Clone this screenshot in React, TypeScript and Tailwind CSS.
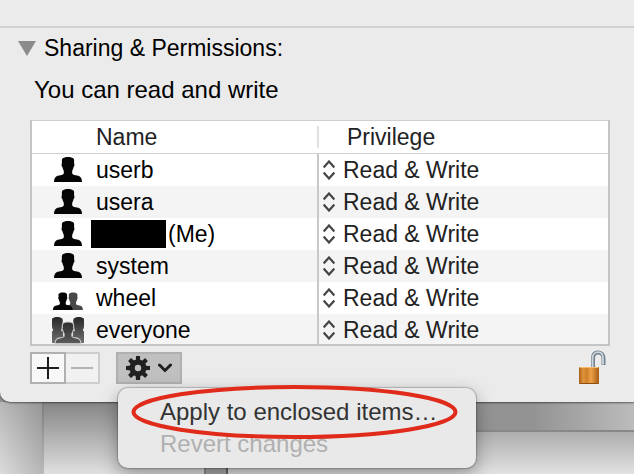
import React from "react"

type IconKind = "user" | "group" | "everyone"

interface Entry {
  id: string
  name: string
  icon: IconKind
  redacted?: boolean
}

const entries: Entry[] = [
  { id: "userb", name: "userb", icon: "user" },
  { id: "usera", name: "usera", icon: "user" },
  { id: "me", name: "(Me)", icon: "user", redacted: true },
  { id: "system", name: "system", icon: "user" },
  { id: "wheel", name: "wheel", icon: "group" },
  { id: "everyone", name: "everyone", icon: "everyone" },
]

// head and shoulders on a 28x25 grid
const BUST =
  "M8.300 1.800C9.500.500 11.500 0 14 0s4.500.500 5.700 1.800c.6 1 .5 2.600.3 4.400.8.200.5 3.300-.5 4-.3 1.500-.7 2.600-1.300 3.500v2.900c.2.8 1.500 1.300 3.300 1.700 2 .4 3.700.6 4.800 1.600C27.600 21 28 22.800 28 25H0c0-2.200.4-4 1.700-5.100 1.100-1 2.800-1.200 4.800-1.600 1.800-.4 3.100-.9 3.300-1.700v-2.900c-.6-.9-1-2-1.300-3.500-1-.7-1.300-3.800-.5-4-.2-1.800-.3-3.400.3-4.400z"

const EntryIcon = ({ kind }: { kind: IconKind }) => {
  if (kind === "group") {
    return (
      <svg className="shrink-0" width="32" height="28" viewBox="0 0 32 28" aria-hidden="true">
        <path d={BUST} fill="#484848" transform="translate(11.300 8.500) scale(.7 .7)" />
        <path d={BUST} fill="#050505" transform="translate(1 8.500) scale(.7 .7)" />
      </svg>
    )
  }
  if (kind === "everyone") {
    return (
      <svg className="shrink-0" width="32" height="28" viewBox="0 0 32 28" aria-hidden="true">
        <defs>
          <linearGradient id="bustFade" x1="0" y1="0" x2="0" y2="1">
            <stop offset="0" stopColor="#262626" />
            <stop offset="1" stopColor="#707070" />
          </linearGradient>
          <linearGradient id="bustFront" x1="0" y1="0" x2="0" y2="1">
            <stop offset="0" stopColor="#2c2c2c" />
            <stop offset="1" stopColor="#5c5c5c" />
          </linearGradient>
        </defs>
        <path d="M0 15H11V27H0zM21 15H32V27H21z" fill="#5c5c5c" />
        <path d={BUST} fill="url(#bustFade)" transform="translate(-7.400 1) scale(.9 1.040)" />
        <path d={BUST} fill="url(#bustFade)" transform="translate(14.200 1) scale(.9 1.040)" />
        <path
          d={BUST}
          fill="url(#bustFront)"
          stroke="#c8c8c8"
          strokeWidth="1.200"
          transform="translate(3.100 6) scale(.92 .86)"
        />
      </svg>
    )
  }
  return (
    <svg className="shrink-0" width="32" height="28" viewBox="0 0 32 28" aria-hidden="true">
      <path d={BUST} fill="#050505" transform="translate(2 1)" />
    </svg>
  )
}

const Stepper = () => (
  <svg
    className="shrink-0"
    width="12"
    height="20"
    viewBox="0 0 12 20"
    fill="none"
    stroke="#444"
    strokeWidth="2.200"
    aria-hidden="true"
  >
    <path d="M.600 7.400 6 1.500 11.400 7.400M.600 12.600 6 18.500 11.400 12.600" />
  </svg>
)

const Gear = () => (
  <svg width="24" height="24" viewBox="-12 -12 24 24" aria-hidden="true">
    <g fill="#202020">
      {[0, 45, 90, 135].map((angle) => (
        <path key={angle} d="M-2-12H2L2.500 7 2 12H-2L-2.500 7z" transform={`rotate(${angle})`} />
      ))}
      <circle r="8.500" />
    </g>
    <circle r="3.200" fill="#c0c0c0" />
  </svg>
)

const Padlock = () => (
  <svg width="28" height="36" viewBox="0 0 28 36" aria-hidden="true">
    <defs>
      <linearGradient id="brass" x1="0" y1="0" x2="1" y2="0">
        <stop offset="0" stopColor="#a95f16" />
        <stop offset=".2" stopColor="#e0943a" />
        <stop offset=".4" stopColor="#cf8029" />
        <stop offset=".6" stopColor="#eda246" />
        <stop offset="1" stopColor="#a65c14" />
      </linearGradient>
    </defs>
    <path d="M14 18V8.500C14 4.500 16 2.500 19 2.500S24.500 4.500 24.500 8.500V15" fill="none" stroke="#73818d" strokeWidth="4" />
    <path d="M13.500 18V8.500C13.500 4.500 16 2.200 19 2.200S24 4.500 24 8.500V14.500" fill="none" stroke="#ccd6de" strokeWidth="1.800" />
    <rect x="0" y="17" width="20" height="17" rx="1" fill="url(#brass)" />
    <path d="M1 17.500H19" stroke="#f5bd6c" />
    <path d="M.500 33.500H19.500" stroke="#8e4e10" />
  </svg>
)

const PermissionsTable = () => (
  <div className="h-[226px] overflow-hidden border-2 border-t border-[#c4c4c4] border-t-[#cfcfcf] bg-white">
    <table className="w-full table-fixed border-separate border-spacing-0 text-left text-[23px] leading-8">
      <colgroup>
        <col className="w-[287px]" />
        <col />
      </colgroup>
      <thead>
        <tr className="text-[#222]">
          <th className="border-b border-[#cfcfcf] p-0 font-normal">
            <div className="flex h-8 items-center justify-between pl-16">
              Name
              <span className="h-[22px] w-[2px] bg-[#e0e0e0]" />
            </div>
          </th>
          <th className="border-b border-[#cfcfcf] p-0 pl-7 font-normal">Privilege</th>
        </tr>
      </thead>
      <tbody>
        {entries.map((entry) => (
          <tr key={entry.id} className="even:bg-[#f4f4f4]">
            <td className="p-0">
              <div className="flex h-8 items-center border-r-2 border-[#c8c8c8] pl-5">
                <EntryIcon kind={entry.icon} />
                {entry.redacted ? (
                  <span className="ml-[7px] flex items-center gap-[2px]">
                    <span className="h-7 w-[75px] bg-black" />
                    {entry.name}
                  </span>
                ) : (
                  <span className="ml-3">{entry.name}</span>
                )}
              </div>
            </td>
            <td className="p-0">
              <div className="flex h-8 items-center gap-2 pl-1 text-[#222]">
                <Stepper />
                <select aria-label={`Privilege for ${entry.name}`} className="appearance-none bg-transparent leading-8">
                  <option>Read &amp; Write</option>
                </select>
              </div>
            </td>
          </tr>
        ))}
      </tbody>
    </table>
  </div>
)

const ActionMenu = () => (
  <div
    role="menu"
    className="absolute top-9 left-[2px] z-10 flex h-20 w-[358px] flex-col rounded-[10px] bg-[#e9e9e9] px-[42px] py-2 text-[24px] leading-8 shadow-[0_0_1px_1px_rgba(0,0,0,0.2),0_6px_18px_rgba(0,0,0,0.35)]"
  >
    <button role="menuitem" className="text-left whitespace-nowrap text-[#333]">
      Apply to enclosed items…
    </button>
    <button role="menuitem" disabled className="text-left whitespace-nowrap text-[#b0b0b0]">
      Revert changes
    </button>
    <svg
      className="pointer-events-none absolute -top-1 left-3"
      width="330"
      height="56"
      viewBox="0 0 330 56"
      fill="none"
      aria-hidden="true"
    >
      <ellipse cx="164.500" cy="28" rx="161" ry="25" stroke="#e02a1a" strokeWidth="4" />
    </svg>
  </div>
)

// the windows that lie behind the info panel
const Backdrop = () => (
  <div className="flex h-[72px]">
    <div className="w-[42px] bg-linear-to-bl from-[#969696] via-[#b8b8b8] to-[#dcdcdc]" />
    <div className="w-[2px] bg-linear-to-b from-[#7c7c7c] to-[#bcbcbc]" />
    <div className="w-[160px] bg-linear-to-b from-[#858585] to-[#e0e0e0]" />
    <div className="w-[2px] bg-[#8c8c8c]" />
    <div className="w-5 bg-linear-to-b from-[#858585] to-[#a8a8a8]" />
    <div className="w-[2px] bg-[#666]" />
    <div className="flex flex-1 flex-col">
      <div className="h-[30px] border-b-2 border-[#888] bg-linear-to-r from-[#939393] from-75% to-[#bcbcbc]" />
      <div className="flex-1 bg-linear-to-b from-[#adadad] to-[#e2e2e2]" />
    </div>
  </div>
)

export default function App() {
  return (
    <div className="flex min-h-screen flex-col overflow-hidden bg-[#929292] font-['Liberation_Sans',Arial,sans-serif] text-black">
      <main className="relative z-10 rounded-bl-[10px] bg-[#ebebeb] pb-[18px] shadow-[0_1px_2px_rgba(0,0,0,0.5)]">
        <div className="h-7 border-b-2 border-[#d2d2d2]" />
        <section className="pr-6 pl-[30px]">
          <h1 className="-ml-3 flex h-10 items-center gap-2 text-[23px]">
            <svg width="18" height="15" viewBox="0 0 18 15" aria-hidden="true">
              <path d="M0 0H18L9 15z" fill="#8b8b8b" />
            </svg>
            Sharing &amp; Permissions:
          </h1>
          <p className="h-[52px] pt-[6px] pl-1 text-[24px] leading-8">You can read and write</p>
          <PermissionsTable />
          <div className="mt-[6px] flex h-8 items-start">
            <button aria-label="Add" className="flex h-8 w-9 items-center justify-center border-2 border-[#b0b0b0] bg-[#f8f8f8]">
              <svg width="22" height="22" viewBox="0 0 22 22" stroke="#1c1c1c" strokeWidth="2" aria-hidden="true">
                <path d="M0 11H22M11 0V22" />
              </svg>
            </button>
            <button
              aria-label="Remove"
              disabled
              className="flex h-8 w-[34px] items-center justify-center border-2 border-l-0 border-[#cecece] bg-[#f1f1f1]"
            >
              <svg width="22" height="2" viewBox="0 0 22 2" aria-hidden="true">
                <path d="M0 0H22V2H0z" fill="#b4b4b4" />
              </svg>
            </button>
            <div className="relative ml-4">
              <button
                aria-label="Action"
                aria-expanded="true"
                className="flex h-8 w-[66px] items-center justify-center gap-2 border-2 border-[#b0b0b0] bg-[#c0c0c0]"
              >
                <Gear />
                <svg width="14" height="10" viewBox="0 0 14 10" fill="none" stroke="#202020" strokeWidth="3" aria-hidden="true">
                  <path d="M1.500 2 7 7.500 12.500 2" strokeLinecap="round" />
                </svg>
              </button>
              <ActionMenu />
            </div>
            <button aria-label="Lock" className="-mt-[2px] mr-[3px] ml-auto">
              <Padlock />
            </button>
          </div>
        </section>
      </main>
      <Backdrop />
    </div>
  )
}
